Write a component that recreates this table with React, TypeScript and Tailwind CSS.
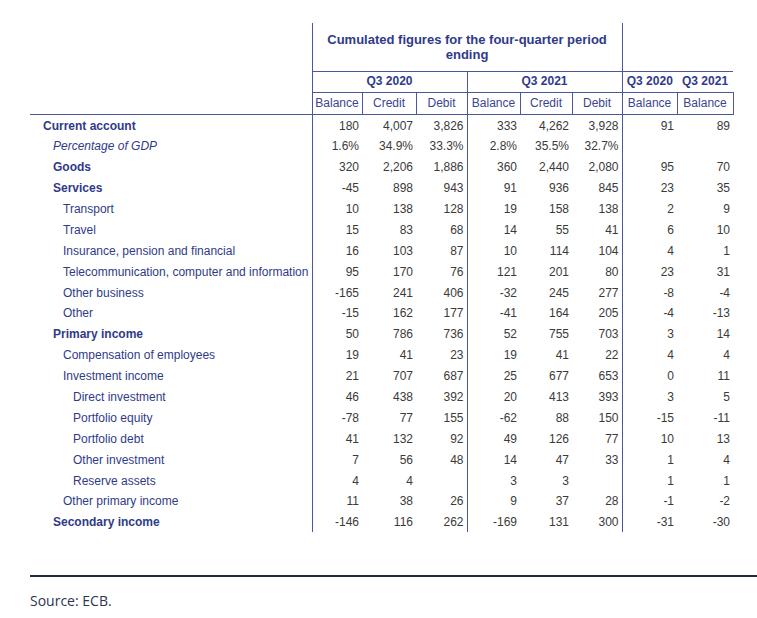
import React from "react";

type Row = { label: string; level: number; bold?: boolean; italic?: boolean; v: string[] };

const rows: Row[] = [
  { label: "Current account", level: 0, bold: true, v: ["180", "4,007", "3,826", "333", "4,262", "3,928", "91", "89"] },
  { label: "Percentage of GDP", level: 1, italic: true, v: ["1.6%", "34.9%", "33.3%", "2.8%", "35.5%", "32.7%", "", ""] },
  { label: "Goods", level: 1, bold: true, v: ["320", "2,206", "1,886", "360", "2,440", "2,080", "95", "70"] },
  { label: "Services", level: 1, bold: true, v: ["-45", "898", "943", "91", "936", "845", "23", "35"] },
  { label: "Transport", level: 2, v: ["10", "138", "128", "19", "158", "138", "2", "9"] },
  { label: "Travel", level: 2, v: ["15", "83", "68", "14", "55", "41", "6", "10"] },
  { label: "Insurance, pension and financial", level: 2, v: ["16", "103", "87", "10", "114", "104", "4", "1"] },
  { label: "Telecommunication, computer and information", level: 2, v: ["95", "170", "76", "121", "201", "80", "23", "31"] },
  { label: "Other business", level: 2, v: ["-165", "241", "406", "-32", "245", "277", "-8", "-4"] },
  { label: "Other", level: 2, v: ["-15", "162", "177", "-41", "164", "205", "-4", "-13"] },
  { label: "Primary income", level: 1, bold: true, v: ["50", "786", "736", "52", "755", "703", "3", "14"] },
  { label: "Compensation of employees", level: 2, v: ["19", "41", "23", "19", "41", "22", "4", "4"] },
  { label: "Investment income", level: 2, v: ["21", "707", "687", "25", "677", "653", "0", "11"] },
  { label: "Direct investment", level: 3, v: ["46", "438", "392", "20", "413", "393", "3", "5"] },
  { label: "Portfolio equity", level: 3, v: ["-78", "77", "155", "-62", "88", "150", "-15", "-11"] },
  { label: "Portfolio debt", level: 3, v: ["41", "132", "92", "49", "126", "77", "10", "13"] },
  { label: "Other investment", level: 3, v: ["7", "56", "48", "14", "47", "33", "1", "4"] },
  { label: "Reserve assets", level: 3, v: ["4", "4", "", "3", "3", "", "1", "1"] },
  { label: "Other primary income", level: 2, v: ["11", "38", "26", "9", "37", "28", "-1", "-2"] },
  { label: "Secondary income", level: 1, bold: true, v: ["-146", "116", "262", "-169", "131", "300", "-31", "-30"] },
];

const pad = ["pl-[13px]", "pl-[23px]", "pl-[33px]", "pl-[43px]"];
const widths = [282, 50, 54, 51, 53, 52, 50, 55, 56];
const subHeads = ["Balance", "Credit", "Debit", "Balance", "Credit", "Debit", "Balance", "Balance"];

export default function App() {
  return (
    <div className="w-[757px] h-[618px] bg-white overflow-hidden pt-[23px] font-['Liberation_Sans',Arial,sans-serif]">
      <table className="ml-[30px] w-[703px] table-fixed border-collapse text-[12px] leading-[15px]">
        <colgroup>
          {widths.map((w, i) => (
            <col key={i} style={{ width: w }} />
          ))}
        </colgroup>
        <thead>
          <tr className="h-[48px]">
            <th className="p-0" />
            <th
              colSpan={6}
              className="p-0 border-l border-r border-b border-[#4a579c] text-[#2f3a8a] font-bold text-center align-middle"
            >
              <div className="px-[10px] text-[13px] leading-[15px]">Cumulated figures for the four-quarter period ending</div>
            </th>
            <th colSpan={2} className="p-0 border-b border-[#4a579c]" />
          </tr>
          <tr className="h-[21px]">
            <th className="p-0" />
            <th colSpan={3} className="p-0 border-l border-r border-b border-[#4a579c] text-[#2f3a8a] font-bold text-center">
              Q3 2020
            </th>
            <th colSpan={3} className="p-0 border-r border-b border-[#4a579c] text-[#2f3a8a] font-bold text-center">
              Q3 2021
            </th>
            <th className="p-0 border-b border-[#4a579c] text-[#2f3a8a] font-bold text-center">Q3 2020</th>
            <th className="p-0 border-b border-[#4a579c] text-[#2f3a8a] font-bold text-center">Q3 2021</th>
          </tr>
          <tr className="h-[22px]">
            <th className="p-0 border-b border-[#4a579c]" />
            {subHeads.map((s, i) => (
              <th key={i} className="p-0 border border-[#4a579c] text-[#3a4592] font-normal text-center">
                {s}
              </th>
            ))}
          </tr>
        </thead>
        <tbody>
          {rows.map((r, ri) => (
            <tr key={ri} className="h-[20.9px]">
              <td
                className={`p-0 pt-[3px] ${pad[r.level]} text-[#2f3a8a] whitespace-nowrap ${r.bold ? "font-bold" : ""} ${
                  r.italic ? "italic" : ""
                }`}
              >
                {r.label}
              </td>
              {r.v.map((v, i) => (
                <td
                  key={i}
                  className={`p-0 pt-[3px] pr-[3px] text-right text-[#3a3a3a] ${i === 0 ? "border-l border-[#4a579c]" : ""} ${
                    i === 2 || i === 5 ? "border-r border-[#4a579c]" : ""
                  }`}
                >
                  {v}
                </td>
              ))}
            </tr>
          ))}
        </tbody>
      </table>
      <div className="mt-[43px] ml-[30px] h-[2px] bg-[#1f2a4d]" />
      <div className="ml-[30px] mt-[15px] text-[14px] leading-[18px] text-[#2d3552] font-['Open_Sans',sans-serif]">
        Source: ECB.
      </div>
    </div>
  );
}
